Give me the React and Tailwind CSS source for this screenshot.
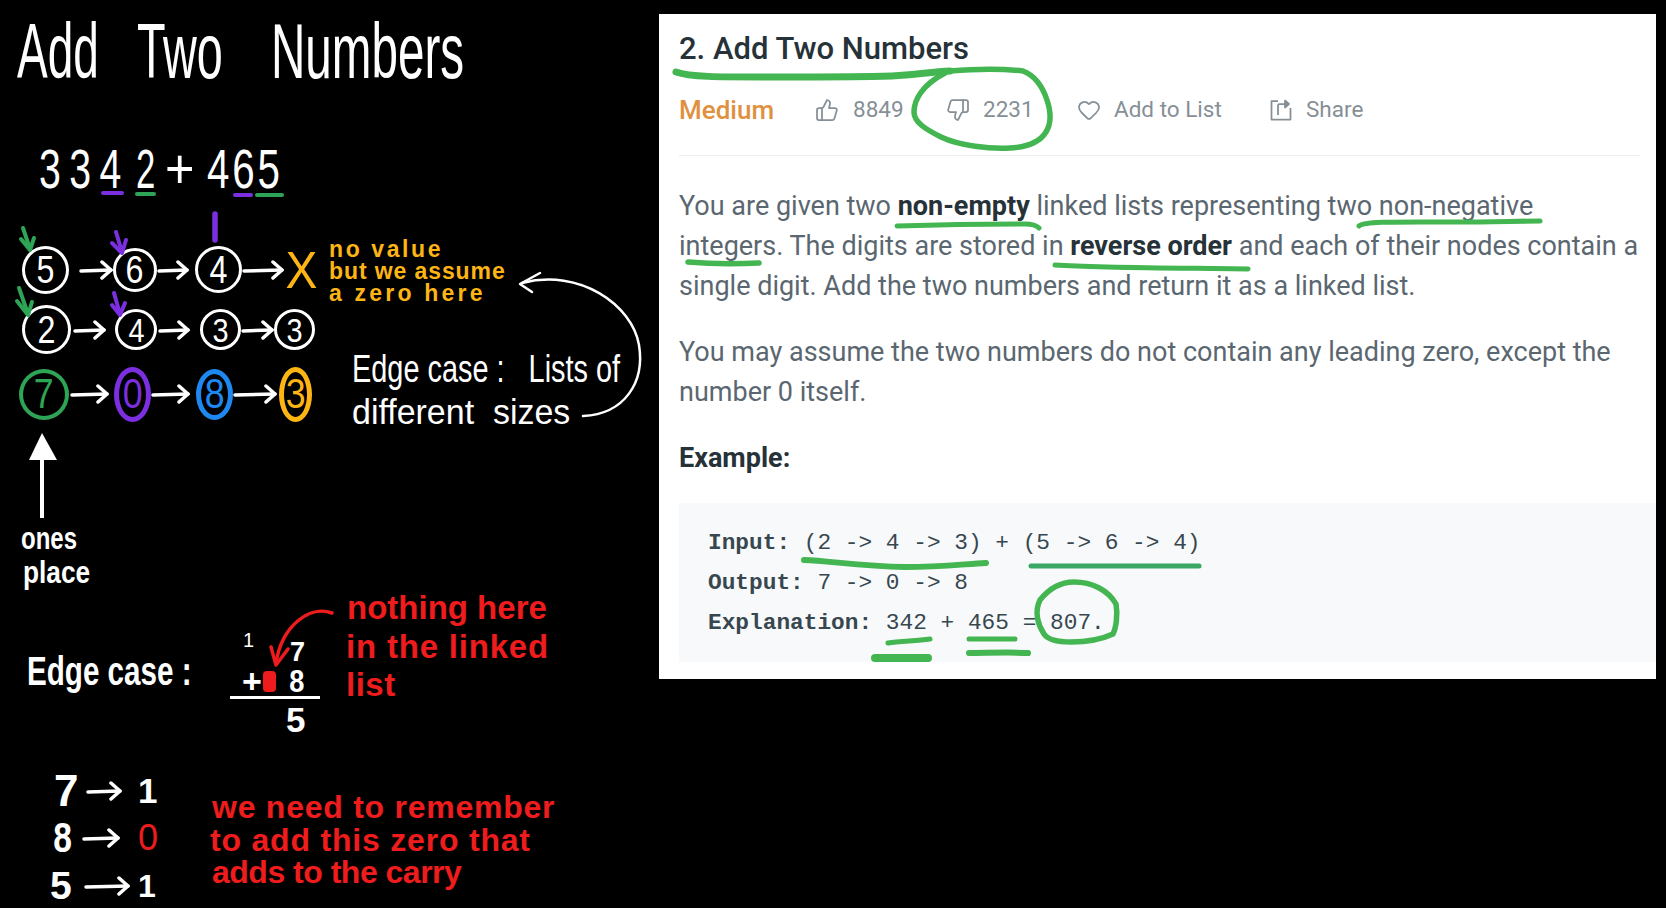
import { ThumbsUp, ThumbsDown, Heart } from 'lucide-react';

const RED = 'text-[#ee1c1c]';

function Line({ className = '', children }) {
  return <span className={`block whitespace-pre origin-left ${className}`}>{children}</span>;
}

// a list node: ring with a digit in it
function Node({ className, digit }) {
  return (
    <div className={`shrink-0 flex items-center justify-center rounded-[50%] ${className}`}>
      <span className="scale-x-[0.85]">{digit}</span>
    </div>
  );
}

// hand drawn arrow that takes part in the row's flow
function FlowArrow({ width, className = '' }) {
  return (
    <svg className={`shrink-0 ${className}`} width={width} height="22" viewBox={`0 0 ${width} 22`} fill="none" stroke="#fff" strokeWidth="3.5" strokeLinecap="round" strokeLinejoin="round">
      <path d={`M2 12L${width - 2} 11`} />
      <path d={`M${width - 11} 3L${width - 2} 11L${width - 11} 19`} />
    </svg>
  );
}

function LinkedLists() {
  return (
    <div className="absolute left-[19px] top-[245px] flex flex-col leading-none">
      <div className="flex items-center h-[49px] pl-[3px] text-[38px]">
        <Node className="w-[47px] h-[48px] border-[3px] border-white" digit="5" />
        <FlowArrow width={34} className="ml-[10px]" />
        <Node className="w-[44px] h-[44px] border-[3px] border-white" digit="6" />
        <FlowArrow width={32} />
        <Node className="ml-[6px] w-[47px] h-[47px] border-[3px] border-white" digit="4" />
        <FlowArrow width={42} />
        <span className="text-[52px] text-[#fdb515] scale-x-[0.92]">X</span>
      </div>
      <div className="mt-[11px] flex items-center h-[49px] pl-[3px] text-[38px]">
        <Node className="w-[49px] h-[49px] border-[3px] border-white" digit="2" />
        <FlowArrow width={33} className="ml-[2px]" />
        <Node className="ml-[9px] w-[42px] h-[41px] border-[3px] border-white text-[34px]" digit="4" />
        <FlowArrow width={32} className="ml-[1px]" />
        <Node className="ml-[10px] w-[41px] h-[41px] border-[3px] border-white text-[34px]" digit="3" />
        <FlowArrow width={33} />
        <Node className="w-[41px] h-[41px] border-[3px] border-white text-[34px]" digit="3" />
      </div>
      <div className="mt-[12px] flex items-center h-[56px] text-[42px]">
        <Node className="w-[50px] h-[51px] border-[4px] border-[#2ea556] text-[#2ea556]" digit="7" />
        <FlowArrow width={39} className="ml-[1px]" />
        <Node className="ml-[5px] w-[37px] h-[55px] border-[5px] border-[#7b2fe0] text-[#7b2fe0]" digit="0" />
        <FlowArrow width={39} />
        <Node className="ml-[6px] w-[37px] h-[51px] border-[5px] border-[#1e88f0] text-[#1e88f0]" digit="8" />
        <FlowArrow width={44} />
        <Node className="ml-[2px] w-[33px] h-[55px] border-[5px] border-[#fdb515] text-[#fdb515]" digit="3" />
      </div>
    </div>
  );
}

function Whiteboard() {
  return (
    <div className="relative w-[659px] h-[908px] text-white leading-none font-['Liberation_Sans',sans-serif]">
      {/* title */}
      <div className="absolute left-[17px] top-[12px] flex text-[78px]">
        <Line className="w-[120px] scale-x-[0.59]">Add</Line>
        <Line className="w-[134px] scale-x-[0.6]">Two</Line>
        <Line className="scale-x-[0.61]">Numbers</Line>
      </div>

      {/* sum */}
      <div className="absolute left-[39px] top-[141px] flex text-[56px]">
        <Line className="w-[97px] scale-x-[0.7] tracking-[12px]">334</Line>
        <Line className="w-[29px] scale-x-[0.62]">2</Line>
        <Line className="w-[42px] scale-x-[0.9]">+</Line>
        <Line className="scale-x-[0.72] tracking-[4px]">465</Line>
      </div>

      <LinkedLists />

      {/* orange note */}
      <div className="absolute left-[329px] top-[238px] text-[23px] leading-[22px] font-bold text-[#fdb515]">
        <Line className="tracking-[2.6px]">no value</Line>
        <Line className="tracking-[0.9px]">but we assume</Line>
        <Line className="tracking-[3.2px]">a zero here</Line>
      </div>

      {/* lists of different sizes */}
      <div className="absolute left-[352px] top-[350px]">
        <Line className="text-[38px] scale-x-[0.76]">{'Edge case :   Lists of'}</Line>
        <Line className="mt-[6px] text-[35px] scale-x-[0.97]">{'different  sizes'}</Line>
      </div>

      <div className="absolute left-[21px] top-[522px] text-[32px] font-bold">
        <Line className="scale-x-[0.75]">ones</Line>
        <Line className="mt-[2px] ml-[2px] scale-x-[0.82]">place</Line>
      </div>

      {/* carry example */}
      <Line className="absolute left-[27px] top-[651px] text-[40px] font-bold scale-x-[0.74]">Edge case :</Line>
      <div className="absolute left-[230px] top-[630px] w-[90px] flex flex-col font-bold">
        <div className="h-[36px] flex justify-between pl-[13px] pr-[15px]">
          <span className="text-[20px] font-normal">1</span>
          <span className="self-end text-[27px]">7</span>
        </div>
        <div className="h-[30px] flex items-center pl-[12px]">
          <span className="text-[34px]">+</span>
          <div className="ml-[1px] w-[13px] h-[21px] rounded-sm bg-[#ee1c1c]" />
          <span className="ml-[12px] text-[32px] scale-x-[0.85]">8</span>
        </div>
        <div className="border-t-[3px] border-white pl-[56px] pt-[3px] text-[35px]">5</div>
      </div>

      <div className={`absolute left-[346px] top-[589px] text-[33px] leading-[38.5px] font-bold ${RED}`}>
        <Line className="ml-[1px]">nothing here</Line>
        <Line className="tracking-[0.8px]">in the linked</Line>
        <Line className="tracking-[0.5px]">list</Line>
      </div>

      {/* digit mapping */}
      <div className="absolute left-[50px] top-[767px] flex flex-col font-bold">
        <div className="h-[47.5px] flex items-center">
          <span className="w-[36px] pl-[4px] text-[44px]">7</span>
          <FlowArrow width={36} />
          <span className="ml-[16px] text-[35px]">1</span>
        </div>
        <div className="h-[47.5px] flex items-center">
          <span className="w-[32px] pl-[4px] text-[42px] origin-left scale-x-[0.8]">8</span>
          <FlowArrow width={38} />
          <span className={`ml-[18px] text-[36px] font-normal ${RED}`}>0</span>
        </div>
        <div className="h-[47.5px] flex items-center">
          <span className="w-[34px] text-[39px]">5</span>
          <FlowArrow width={46} />
          <span className="ml-[8px] text-[32px]">1</span>
        </div>
      </div>

      <div className={`absolute left-[210px] top-[791px] text-[32px] leading-[32.5px] font-bold ${RED}`}>
        <Line className="ml-[2px] tracking-[0.75px]">we need to remember</Line>
        <Line className="tracking-[0.8px]">to add this zero that</Line>
        <Line className="ml-[2px] tracking-[-0.5px]">adds to the carry</Line>
      </div>

      {/* strokes */}
      <svg className="absolute inset-0 pointer-events-none" width="659" height="908" viewBox="0 0 659 908" fill="none">
        <g strokeWidth="4" strokeLinecap="round">
          <path d="M103 193H122" stroke="#7b2fe0" />
          <path d="M137 194H154" stroke="#2ea556" />
          <path d="M235 195H251" stroke="#7b2fe0" />
          <path d="M257 195H282" stroke="#2ea556" />
        </g>
        <path d="M215 214V240" stroke="#7b2fe0" strokeWidth="5.5" strokeLinecap="round" />

        {/* pointers */}
        <g strokeWidth="4" strokeLinecap="round" strokeLinejoin="round">
          <g stroke="#2ea556">
            <path d="M23 228L30 249" />
            <path d="M21 239L30 250L34 238" />
            <path d="M19 288L28 314" />
            <path d="M17 301L28 315L32 302" />
          </g>
          <g stroke="#7b2fe0">
            <path d="M116 232L122 252" />
            <path d="M112 243L122 253L126 240" />
            <path d="M114 293L120 314" />
            <path d="M112 305L120 315L125 303" />
          </g>
        </g>

        {/* edge case curve */}
        <g stroke="#fff" strokeWidth="2.5" strokeLinecap="round" strokeLinejoin="round">
          <path d="M583 416C625 414 645 382 639 345C632 305 580 268 522 283" />
          <path d="M540 273L520 284L532 292" />
        </g>

        {/* ones place arrow */}
        <path d="M42 433L57 460H29Z" fill="#fff" />
        <path d="M42 458V518" stroke="#fff" strokeWidth="4" />

        {/* red note arrow */}
        <g stroke="#ee1c1c" strokeWidth="3.5" strokeLinecap="round" strokeLinejoin="round">
          <path d="M332 613C310 605 282 625 276 663" />
          <path d="M271 647L276 665L288 649" />
        </g>
      </svg>
    </div>
  );
}

function ShareIcon() {
  return (
    <svg width="24" height="24" viewBox="0 0 24 24" fill="none" stroke="currentColor" strokeWidth="1.75" strokeLinejoin="round">
      <path d="M9 3H2.5V21.5H21.5V10" />
      <path d="M9 17V7.5C9 6.5 9.5 6 10.5 6H17" />
      <path d="M16 2.5L20 6L16 9.5Z" fill="currentColor" />
    </svg>
  );
}

function Problem() {
  return (
    <div className="mt-[14px] w-[997px] h-[665px] bg-white font-['Roboto',sans-serif] text-[#5b6770] pt-[15px]">
      <h1 className="ml-[20px] text-[31px] leading-[40px] font-medium text-[#263238]">2. Add Two Numbers</h1>

      <div className="ml-[20px] mt-[21px] h-[40px] flex items-center text-[22.5px] text-[#868f96]">
        <span className="w-[136px] text-[26px] font-medium text-[#e0913f]">Medium</span>
        <ThumbsUp className="w-[24px] h-[24px]" strokeWidth={1.75} />
        <span className="ml-[14px] w-[93px]">8849</span>
        <ThumbsDown className="w-[24px] h-[24px]" strokeWidth={1.75} />
        <span className="ml-[13px] w-[94px]">2231</span>
        <Heart className="w-[24px] h-[24px]" strokeWidth={1.75} />
        <span className="ml-[13px] w-[155px]">Add to List</span>
        <ShareIcon />
        <span className="ml-[13px]">Share</span>
      </div>

      <div className="ml-[20px] mr-[16px] mt-[25px] border-t border-[#eceff1]" />

      <p className="ml-[20px] mt-[30px] text-[27px] leading-[40px] whitespace-nowrap">
        You are given two <b className="font-bold text-[#263238]">non-empty</b> linked lists representing two non-negative<br />
        integers. The digits are stored in <b className="font-bold text-[#263238]">reverse order</b> and each of their nodes contain a<br />
        single digit. Add the two numbers and return it as a linked list.
      </p>
      <p className="ml-[20px] mt-[26px] text-[27px] leading-[40px] whitespace-nowrap">
        You may assume the two numbers do not contain any leading zero, except the<br />
        number 0 itself.
      </p>
      <p className="ml-[20px] mt-[26px] text-[27px] leading-[40px] font-bold text-[#263238]">Example:</p>

      <pre className="ml-[20px] mt-[25px] h-[159px] pt-[20px] pl-[29px] bg-[#f7f9fa] font-['Liberation_Mono',monospace] text-[22.8px] leading-[40px] text-[#37474f]">
        <span className="font-bold">Input:</span> {'(2 -> 4 -> 3) + (5 -> 6 -> 4)\n'}
        <span className="font-bold">Output:</span> {'7 -> 0 -> 8\n'}
        <span className="font-bold">Explanation:</span> {'342 + 465 = 807.'}
      </pre>
    </div>
  );
}

export default function App() {
  return (
    <div className="relative w-[1666px] h-[908px] overflow-hidden bg-black flex">
      <Whiteboard />
      <Problem />

      {/* green highlighter over the problem statement */}
      <svg className="absolute inset-0 pointer-events-none" width="1666" height="908" viewBox="0 0 1666 908" fill="none">
        <g stroke="#43b551" strokeLinecap="round" strokeLinejoin="round">
          <path strokeWidth="5.5" d="M950 71C975 69 1005 69 1023 71C1036 76 1043 88 1047 100C1051 112 1051 124 1046 132C1040 142 1028 147 1010 148C990 149 960 146 941 137C925 129 914 122 914 112C914 100 922 85 945 73" />
          <path strokeWidth="7" d="M676 72C690 77 720 77 760 77C810 77 860 77 892 76C915 75 930 72 950 71" />
          <path strokeWidth="5" d="M897 226C930 225 990 224 1025 224C1032 224 1037 226 1039 228" />
          <path strokeWidth="5" d="M1359 226C1365 221 1400 222 1456 222C1490 222 1520 221 1540 221" />
          <path strokeWidth="5.5" d="M688 262C710 264 740 264 759 263" />
          <path strokeWidth="5" d="M1055 265C1100 268 1180 268 1248 269" />
          <path strokeWidth="6" d="M804 560C830 561 860 566 905 567C940 567 965 564 986 563" />
          <path strokeWidth="5" stroke="#3aa864" d="M1031 566H1199" />
          <path strokeWidth="5.5" d="M1040 600C1048 590 1060 582 1074 582C1092 582 1108 590 1116 604C1118 615 1116 628 1113 634C1100 640 1085 642 1071 642C1058 642 1048 640 1044 634C1038 625 1034 612 1040 600Z" />
          <path strokeWidth="5" d="M888 643C900 641 915 641 930 639" />
          <path strokeWidth="8" d="M875 658H928" />
          <path strokeWidth="5" d="M969 639H1015" />
          <path strokeWidth="6" d="M969 653C985 653 1010 652 1028 653" />
        </g>
      </svg>
    </div>
  );
}
